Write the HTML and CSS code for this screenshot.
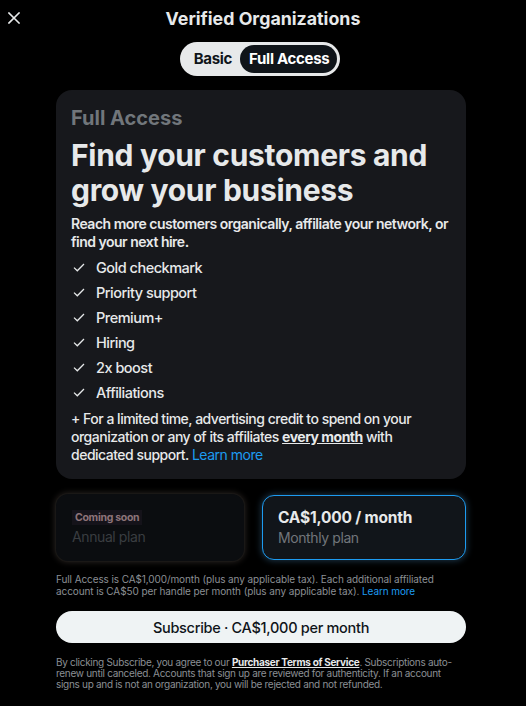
FILE: index.html
```html
<!DOCTYPE html>
<html lang="en">
<head>
<meta charset="utf-8">
<title>Verified Organizations</title>
<link rel="stylesheet" href="styles.css">
</head>
<body>
<div class="modal">
  <header class="topbar">
    <button class="close" aria-label="Close">
      <svg viewBox="0 0 12 12" width="12" height="12"><path d="M1 1 L11 11 M11 1 L1 11" stroke="#e7e9ea" stroke-width="1.6" fill="none" stroke-linecap="square"/></svg>
    </button>
    <h1 class="title">Verified Organizations</h1>
    <span class="spacer"></span>
  </header>

  <div class="toggle-row">
    <div class="toggle">
      <span class="opt">Basic</span>
      <span class="opt active">Full Access</span>
    </div>
  </div>

  <main class="content">
    <section class="card">
      <div class="kicker">Full Access</div>
      <h2 class="headline">Find your customers and grow your business</h2>
      <p class="lead">Reach more customers organically, affiliate your network, or find your next hire.</p>
      <ul class="features">
        <li><svg class="check" viewBox="0 0 12 9" width="12" height="9"><path d="M1 4.6 L4.3 7.8 L11 1" stroke="#e7e9ea" stroke-width="1.3" fill="none"/></svg>Gold checkmark</li>
        <li><svg class="check" viewBox="0 0 12 9" width="12" height="9"><path d="M1 4.6 L4.3 7.8 L11 1" stroke="#e7e9ea" stroke-width="1.3" fill="none"/></svg>Priority support</li>
        <li><svg class="check" viewBox="0 0 12 9" width="12" height="9"><path d="M1 4.6 L4.3 7.8 L11 1" stroke="#e7e9ea" stroke-width="1.3" fill="none"/></svg>Premium+</li>
        <li><svg class="check" viewBox="0 0 12 9" width="12" height="9"><path d="M1 4.6 L4.3 7.8 L11 1" stroke="#e7e9ea" stroke-width="1.3" fill="none"/></svg>Hiring</li>
        <li><svg class="check" viewBox="0 0 12 9" width="12" height="9"><path d="M1 4.6 L4.3 7.8 L11 1" stroke="#e7e9ea" stroke-width="1.3" fill="none"/></svg>2x boost</li>
        <li><svg class="check" viewBox="0 0 12 9" width="12" height="9"><path d="M1 4.6 L4.3 7.8 L11 1" stroke="#e7e9ea" stroke-width="1.3" fill="none"/></svg>Affiliations</li>
      </ul>
      <p class="promo">+ For a limited time, advertising credit to spend on your organization or any of its affiliates <u class="strong">every month</u> with dedicated support. <a class="link" href="#">Learn more</a></p>
    </section>

    <div class="plans">
      <div class="plan disabled">
        <span class="badge">Coming soon</span>
        <span class="plan-sub">Annual plan</span>
      </div>
      <div class="plan selected">
        <span class="plan-price">CA$1,000 / month</span>
        <span class="plan-sub">Monthly plan</span>
      </div>
    </div>

    <p class="fine">Full Access is CA$1,000/month (plus any applicable tax). Each additional affiliated account is CA$50 per handle per month (plus any applicable tax). <a class="link" href="#">Learn more</a></p>

    <button class="subscribe">Subscribe · CA$1,000 per month</button>

    <p class="legal">By clicking Subscribe, you agree to our <u class="terms">Purchaser Terms of Service</u>. Subscriptions auto-renew until canceled. Accounts that sign up are reviewed for authenticity. If an account signs up and is not an organization, you will be rejected and not refunded.</p>
  </main>
</div>
</body>
</html>
```

FILE: styles.css
```css
* { box-sizing: border-box; }
html, body { margin: 0; padding: 0; background: #000; }
body {
  font-family: Inter, "Noto Sans", "Liberation Sans", sans-serif;
  color: #e7e9ea;
  width: 526px;
  height: 706px;
  overflow: hidden;
}
.topbar {
  display: grid;
  grid-template-columns: 36px 1fr 36px;
  align-items: center;
  height: 36px;
}
.close {
  background: none;
  border: 0;
  padding: 0;
  margin: 0 0 0 8px;
  width: 12px;
  height: 12px;
  display: flex;
}
.title {
  margin: 0;
  text-align: center;
  font-size: 17.8px;
  font-weight: 700;
  color: #e7e9ea;
}
.toggle-row {
  display: flex;
  justify-content: center;
  padding-top: 6px;
  padding-right: 6px;
}
.toggle {
  display: flex;
  align-items: center;
  background: #e7e9ea;
  border-radius: 999px;
  padding: 3px;
  height: 34px;
}
.opt {
  font-size: 15px;
  font-weight: 700;
  letter-spacing: -0.3px;
  color: #0f1419;
  padding: 0 8px 0 11px;
  height: 28px;
  line-height: 28px;
  border-radius: 999px;
}
.opt.active {
  background: #0f1419;
  color: #fff;
  padding: 0 8px 0 9px;
}
.content {
  width: 410px;
  margin: 14px 0 0 56px;
}
.card {
  background: #17181c;
  border-radius: 16px;
  padding: 15px 15px 15px;
}
.kicker {
  font-size: 20px;
  font-weight: 700;
  color: #71767b;
  line-height: 26px;
}
.headline {
  margin: 7px 0 0;
  font-size: 30px;
  line-height: 35px;
  font-weight: 700;
  color: #e7e9ea;
  letter-spacing: -0.3px;
}
.lead {
  margin: 7px 0 0;
  font-size: 14px;
  line-height: 18px;
  font-weight: 600;
  letter-spacing: -0.5px;
  color: #e7e9ea;
}
.features {
  list-style: none;
  margin: 4px 0 0;
  padding: 0;
}
.features li {
  display: flex;
  align-items: center;
  height: 25px;
  font-size: 14.5px;
  font-weight: 500;
  letter-spacing: -0.5px;
}
.check {
  margin: 0 11px 0 2px;
  flex: none;
}
.promo {
  margin: 5px 0 0;
  font-size: 14px;
  line-height: 18px;
  font-weight: 500;
  letter-spacing: -0.5px;
}
.strong { font-weight: 700; }
.link { color: #1d9bf0; text-decoration: none; font-weight: 400; }
.plans {
  display: flex;
  gap: 18px;
  margin-top: 15px;
}
.plan {
  height: 67px;
  border-radius: 12px;
  display: flex;
  flex-direction: column;
  justify-content: center;
  padding: 0 15px;
}
.plan.disabled {
  width: 188px;
  background: #0b0d10;
  box-shadow: 0 0 0 1px #1a1816, 0 0 6px 1px #2a2522;
  padding-left: 16px;
}
.plan.selected {
  flex: 1;
  background: #11151a;
  border: 1px solid #1d9bf0;
  box-shadow: 0 0 6px 1px #1c3446;
  margin-top: 1px;
  height: 65px;
  padding-left: 15px;
}
.badge {
  align-self: flex-start;
  font-size: 10.5px;
  font-weight: 700;
  letter-spacing: -0.3px;
  color: #8d7479;
  background: #15131a;
  padding: 1px 3px;
  line-height: 13px;
}
.plan-sub {
  font-size: 14px;
  color: #71767b;
  line-height: 19px;
  letter-spacing: -0.4px;
}
.disabled .plan-sub { color: #3a3d41; margin-top: 2px; }
.plan-price {
  font-size: 15.5px;
  font-weight: 700;
  color: #e7e9ea;
  line-height: 20px;
  letter-spacing: -0.2px;
}
.fine {
  margin: 13px 0 0;
  font-size: 10px;
  line-height: 11.5px;
  color: #8b8f94;
  letter-spacing: -0.1px;
}
.subscribe {
  display: block;
  width: 100%;
  margin-top: 14px;
  height: 32px;
  border: 0;
  border-radius: 999px;
  background: #eff3f4;
  color: #0f1419;
  font-family: inherit;
  font-size: 14.5px;
  font-weight: 500;
  letter-spacing: -0.3px;
}
.legal {
  margin: 14px 0 0;
  font-size: 10px;
  line-height: 11px;
  color: #8b8f94;
  letter-spacing: -0.3px;
}
.terms { color: #e7e9ea; font-weight: 700; }
```
